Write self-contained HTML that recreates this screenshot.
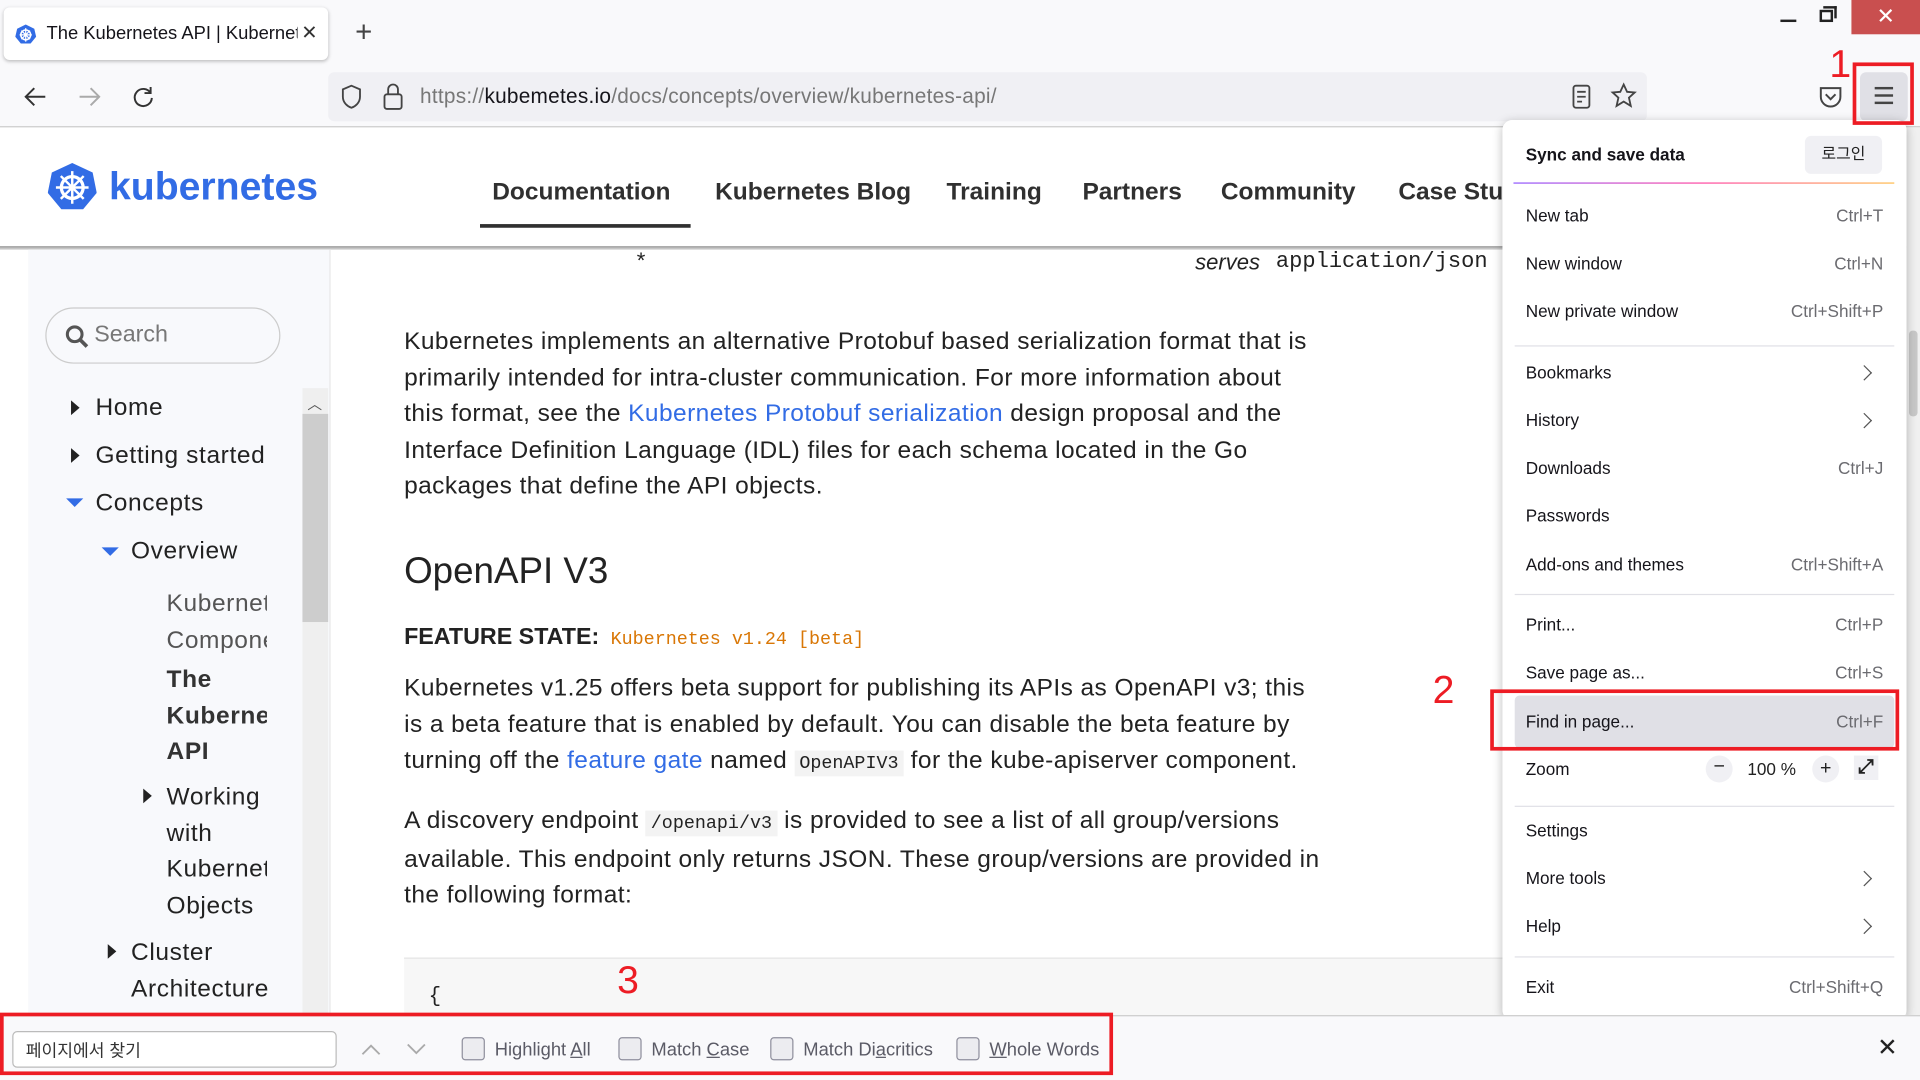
<!DOCTYPE html>
<html><head><meta charset="utf-8">
<style>
*{box-sizing:border-box;margin:0;padding:0}
html,body{width:1920px;height:1080px;overflow:hidden;background:#fff}
#s{position:absolute;left:0;top:0;width:1568px;height:882px;transform:scale(1.22449);transform-origin:0 0;font-family:"Liberation Sans","Noto Sans CJK KR",sans-serif;color:#222}
.a{position:absolute}
.mi{position:absolute;left:1246px;font-size:14px;color:#15141a}
.sc{position:absolute;right:30px;font-size:14px;color:#6b6b70}
.hr{position:absolute;left:1237px;width:310px;height:1px;background:#e0e0e6}
.ch{position:absolute;left:1521px;width:9px;height:9px;border-right:1.5px solid #555;border-top:1.5px solid #555;transform:rotate(45deg)}
.p{position:absolute;left:330px;font-size:20px;line-height:29.5px;color:#222;width:748px;letter-spacing:.35px}
.lk{color:#326ce5}
code{font-family:"Liberation Mono",monospace;font-size:15px;background:#f3f3f3;padding:2px 4px;letter-spacing:0}
.nav{position:absolute;top:146px;font-size:20px;font-weight:bold;color:#303030}
.sb{position:absolute;font-size:20px;color:#222;letter-spacing:.5px}
.tri{position:absolute;width:0;height:0;border-top:6px solid transparent;border-bottom:6px solid transparent;border-left:7px solid #222}
.trd{position:absolute;width:0;height:0;border-left:7px solid transparent;border-right:7px solid transparent;border-top:7px solid #326ce5}
.cb{position:absolute;top:847px;width:19px;height:19px;border:1px solid #8f8f9d;border-radius:3px;background:#ececf0}
.fl{position:absolute;top:849px;font-size:15px;color:#5b5b66}
.red{position:absolute;border:3px solid #ed1c24}
.rn{position:absolute;color:#ed1c24;font-size:32px;font-family:"Liberation Sans",sans-serif}
</style></head><body><div id="s">
<div class="a" style="left:0;top:0;width:1568px;height:104px;background:#f9f9fb"></div>
<div class="a" style="left:3px;top:6px;width:265px;height:43px;background:#fff;border-radius:5px;box-shadow:0 1px 3px rgba(0,0,0,.25)"></div>
<svg class="a" style="left:12px;top:19px" width="18" height="18" viewBox="0 0 18 18"><polygon points="9,1 16,4.5 17.5,11 13,16.5 5,16.5 0.5,11 2,4.5" fill="#326ce5"/><circle cx="9" cy="9.5" r="4" fill="none" stroke="#fff" stroke-width="1.3"/><path d="M9 4v11M4 9.5h10M5.5 6l7 7M12.5 6l-7 7" stroke="#fff" stroke-width="1"/></svg>
<div class="a" style="left:38px;top:19px;font-size:15px;color:#15141a;white-space:nowrap;width:205px;overflow:hidden">The Kubernetes API | Kubernet</div>
<div class="a" style="left:246px;top:17px;font-size:16px;color:#333">✕</div>
<div class="a" style="left:290px;top:13px;font-size:24px;color:#444;font-weight:300">+</div>
<div class="a" style="left:1454px;top:16px;width:13px;height:2px;background:#222"></div>
<div class="a" style="left:1486px;top:8px;width:11px;height:10px;border:2px solid #222"></div>
<div class="a" style="left:1489px;top:5px;width:11px;height:10px;border-top:2px solid #222;border-right:2px solid #222"></div>
<div class="a" style="left:1512px;top:0;width:56px;height:28px;background:#c94f4f;color:#fff;font-size:18px;text-align:center;line-height:26px">✕</div>
<svg class="a" style="left:18px;top:68px" width="22" height="22"><path d="M19 11H3M10 4l-7 7 7 7" fill="none" stroke="#333" stroke-width="1.6"/></svg>
<svg class="a" style="left:62px;top:68px" width="22" height="22"><path d="M3 11h16M12 4l7 7-7 7" fill="none" stroke="#aaa" stroke-width="1.6"/></svg>
<svg class="a" style="left:106px;top:68px" width="22" height="22"><path d="M17 8A7 7 0 1 0 18 12M17 3v5h-5" fill="none" stroke="#333" stroke-width="1.6"/></svg>
<div class="a" style="left:268px;top:59px;width:1077px;height:40px;background:#f0f0f4;border-radius:5px"></div>
<svg class="a" style="left:277px;top:68px" width="20" height="22"><path d="M10 2L3 5v6c0 5 4 8 7 9 3-1 7-4 7-9V5z" fill="none" stroke="#444" stroke-width="1.5"/></svg>
<svg class="a" style="left:312px;top:67px" width="18" height="24"><rect x="2" y="10" width="14" height="12" rx="2" fill="none" stroke="#444" stroke-width="1.5"/><path d="M5 10V6a4 4 0 0 1 8 0v4" fill="none" stroke="#444" stroke-width="1.5"/></svg>
<div class="a" style="left:343px;top:69px;font-size:17px;color:#777;letter-spacing:.2px">https://<span style="color:#15141a">kubemetes.io</span>/docs/concepts/overview/kubernetes-api/</div>
<svg class="a" style="left:1282px;top:68px" width="20" height="22"><rect x="3" y="2" width="13" height="18" rx="2" fill="none" stroke="#444" stroke-width="1.5"/><path d="M6 7h7M6 11h7M6 15h4" stroke="#444" stroke-width="1.5"/></svg>
<svg class="a" style="left:1315px;top:67px" width="22" height="22"><polygon points="11,2 13.8,8 20,8.5 15.3,12.8 16.8,19.5 11,16 5.2,19.5 6.7,12.8 2,8.5 8.2,8" fill="none" stroke="#444" stroke-width="1.5"/></svg>
<svg class="a" style="left:1484px;top:68px" width="22" height="22"><path d="M3 4h16v7a8 8 0 0 1-16 0z" fill="none" stroke="#444" stroke-width="1.6"/><path d="M7 9l4 4 4-4" fill="none" stroke="#444" stroke-width="1.6"/></svg>
<div class="a" style="left:1519px;top:59px;width:39px;height:40px;background:#e0e0e6;border-radius:5px"></div>
<div class="a" style="left:1531px;top:71px;width:15px;height:2px;background:#444;box-shadow:0 6px 0 #444,0 12px 0 #444"></div>
<div class="a" style="left:0;top:103px;width:1568px;height:1px;background:#ccc"></div>
<svg class="a" style="left:39px;top:132px" width="40" height="40" viewBox="0 0 18 18"><polygon points="9,0.5 16.5,4 18,11.5 13,17.5 5,17.5 0,11.5 1.5,4" fill="#326ce5"/><circle cx="9" cy="9.5" r="4" fill="none" stroke="#fff" stroke-width="1.2"/><path d="M9 3.5v12M3 9.5h12M4.8 5.3l8.4 8.4M13.2 5.3l-8.4 8.4" stroke="#fff" stroke-width=".9"/></svg>
<div class="a" style="left:89px;top:134px;font-size:32px;font-weight:bold;color:#326ce5">kubernetes</div>
<div class="nav" style="left:402px">Documentation</div>
<div class="a" style="left:392px;top:183px;width:172px;height:3px;background:#303030"></div>
<div class="nav" style="left:584px">Kubernetes Blog</div>
<div class="nav" style="left:773px">Training</div>
<div class="nav" style="left:884px">Partners</div>
<div class="nav" style="left:997px">Community</div>
<div class="nav" style="left:1142px">Case Stu</div>
<div class="a" style="left:0;top:201px;width:1568px;height:3px;background:linear-gradient(#999,#ddd)"></div>
<div class="a" style="left:23px;top:204px;width:247px;height:626px;background:#f8f9fc;border-right:1px solid #e8e8e8"></div>
<div class="a" style="left:37px;top:251px;width:192px;height:46px;border:1px solid #ccc;border-radius:23px;background:#f8f9fc"></div>
<svg class="a" style="left:52px;top:264px" width="22" height="22"><circle cx="9" cy="9" r="6" fill="none" stroke="#555" stroke-width="2.5"/><path d="M13 13l6 6" stroke="#555" stroke-width="3"/></svg>
<div class="a" style="left:77px;top:263px;font-size:19px;color:#777">Search</div>
<div class="a" style="left:247px;top:317px;width:21px;height:513px;background:#efefef"></div>
<div class="a" style="left:247px;top:338px;width:21px;height:170px;background:#cdcdcd"></div>
<div class="a" style="left:251px;top:321px;font-size:12px;color:#555">︿</div>
<div class="tri" style="left:58px;top:327px"></div><div class="sb" style="left:78px;top:322px">Home</div>
<div class="tri" style="left:58px;top:366px"></div><div class="sb" style="left:78px;top:361px">Getting started</div>
<div class="trd" style="left:54px;top:407px"></div><div class="sb" style="left:78px;top:400px">Concepts</div>
<div class="trd" style="left:83px;top:447px"></div><div class="sb" style="left:107px;top:439px">Overview</div>
<div class="sb" style="left:136px;top:478px;color:#555;width:82px;overflow:hidden;white-space:nowrap;line-height:30px;font-weight:300">Kubernet<br>Compone</div>
<div class="sb" style="left:136px;top:541px;font-weight:bold;color:#333;width:82px;overflow:hidden;white-space:nowrap;line-height:29.5px">The<br>Kuberne<br>API</div>
<div class="tri" style="left:117px;top:644px"></div>
<div class="sb" style="left:136px;top:637px;width:82px;overflow:hidden;white-space:nowrap;line-height:29.5px">Working<br>with<br>Kubernet<br>Objects</div>
<div class="tri" style="left:88px;top:771px"></div>
<div class="sb" style="left:107px;top:764px;line-height:29.5px">Cluster<br>Architecture</div>
<div class="a" style="left:520px;top:203px;font-size:18px">*</div>
<div class="a" style="left:976px;top:204px;font-size:18px;font-style:italic">serves</div>
<div class="a" style="left:1042px;top:204px;font-size:18px;font-family:'Liberation Mono',monospace">application/json</div>
<div class="p" style="top:265px">Kubernetes implements an alternative Protobuf based serialization format that is primarily intended for intra-cluster communication. For more information about this format, see the <span class="lk">Kubernetes Protobuf serialization</span> design proposal and the Interface Definition Language (IDL) files for each schema located in the Go packages that define the API objects.</div>
<div class="a" style="left:330px;top:450px;font-size:30px;color:#222">OpenAPI V3</div>
<div class="a" style="left:330px;top:510px;font-size:19px;font-weight:bold">FEATURE STATE: <code style="background:none;color:#d97706;font-weight:normal">Kubernetes v1.24 [beta]</code></div>
<div class="p" style="top:548px">Kubernetes v1.25 offers beta support for publishing its APIs as OpenAPI v3; this is a beta feature that is enabled by default. You can disable the beta feature by turning off the <span class="lk">feature gate</span> named <code>OpenAPIV3</code> for the kube-apiserver component.</div>
<div class="p" style="top:656px">A discovery endpoint <code>/openapi/v3</code> is provided to see a list of all group/versions available. This endpoint only returns JSON. These group/versions are provided in the following format:</div>
<div class="a" style="left:330px;top:782px;width:900px;height:50px;background:#f7f7f7;border-top:1px solid #e5e5e5"></div>
<div class="a" style="left:350px;top:805px;font-size:17px;font-family:'Liberation Mono',monospace">{</div>
<div class="a" style="left:1557px;top:104px;width:11px;height:725px;background:#f0f0f0"></div>
<div class="a" style="left:1559px;top:270px;width:7px;height:70px;background:#c8c8c8;border-radius:3px"></div>
<div class="a" style="left:1227px;top:98px;width:330px;height:735px;background:#fff;border-radius:8px;box-shadow:0 2px 8px rgba(0,0,0,.25)"></div>
<div class="mi" style="top:118px;font-weight:bold">Sync and save data</div>
<div class="a" style="left:1474px;top:111px;width:63px;height:31px;background:#f0f0f4;border-radius:5px;font-size:13px;text-align:center;line-height:30px">로그인</div>
<div class="a" style="left:1236px;top:149px;width:311px;height:1px;background:linear-gradient(90deg,#9059ff,#ff4aa2,#ffbd4f)"></div>
<div class="mi" style="top:168px">New tab</div><div class="sc" style="top:168px">Ctrl+T</div>
<div class="mi" style="top:207px">New window</div><div class="sc" style="top:207px">Ctrl+N</div>
<div class="mi" style="top:246px">New private window</div><div class="sc" style="top:246px">Ctrl+Shift+P</div>
<div class="hr" style="top:282px"></div>
<div class="mi" style="top:296px">Bookmarks</div><div class="ch" style="top:300px;left:1518px"></div>
<div class="mi" style="top:335px">History</div><div class="ch" style="top:339px;left:1518px"></div>
<div class="mi" style="top:374px">Downloads</div><div class="sc" style="top:374px">Ctrl+J</div>
<div class="mi" style="top:413px">Passwords</div>
<div class="mi" style="top:453px">Add-ons and themes</div><div class="sc" style="top:453px">Ctrl+Shift+A</div>
<div class="hr" style="top:485px"></div>
<div class="mi" style="top:502px">Print...</div><div class="sc" style="top:502px">Ctrl+P</div>
<div class="mi" style="top:541px">Save page as...</div><div class="sc" style="top:541px">Ctrl+S</div>
<div class="a" style="left:1237px;top:568px;width:310px;height:43px;background:#e0e0e6;border-radius:4px"></div>
<div class="mi" style="top:581px">Find in page...</div><div class="sc" style="top:581px">Ctrl+F</div>
<div class="mi" style="top:620px">Zoom</div>
<div class="a" style="left:1393px;top:617px;width:22px;height:22px;border-radius:11px;background:#f0f0f4;text-align:center;font-size:16px;line-height:20px">−</div>
<div class="a" style="left:1427px;top:620px;font-size:14px">100 %</div>
<div class="a" style="left:1480px;top:617px;width:22px;height:22px;border-radius:11px;background:#f0f0f4;text-align:center;font-size:16px;line-height:21px">+</div>
<div class="a" style="left:1514px;top:617px;width:20px;height:20px;background:#f0f0f4;font-size:16px;text-align:center;line-height:20px;font-weight:bold">⤢</div>
<div class="hr" style="top:658px"></div>
<div class="mi" style="top:670px">Settings</div>
<div class="mi" style="top:709px">More tools</div><div class="ch" style="top:713px;left:1518px"></div>
<div class="mi" style="top:748px">Help</div><div class="ch" style="top:752px;left:1518px"></div>
<div class="hr" style="top:781px"></div>
<div class="mi" style="top:798px">Exit</div><div class="sc" style="top:798px">Ctrl+Shift+Q</div>
<div class="a" style="left:0;top:829px;width:1568px;height:53px;background:#f9f9fb;border-top:1px solid #ccc"></div>
<div class="a" style="left:10px;top:842px;width:265px;height:30px;background:#fff;border:1px solid #bbb;border-radius:4px;font-size:14px;padding:5px 10px;color:#333">페이지에서 찾기</div>
<svg class="a" style="left:294px;top:850px" width="18" height="14"><path d="M2 11l7-7 7 7" fill="none" stroke="#aaa" stroke-width="1.5"/></svg>
<svg class="a" style="left:331px;top:850px" width="18" height="14"><path d="M2 3l7 7 7-7" fill="none" stroke="#aaa" stroke-width="1.5"/></svg>
<div class="cb" style="left:377px"></div><div class="fl" style="left:404px">Highlight <u>A</u>ll</div>
<div class="cb" style="left:505px"></div><div class="fl" style="left:532px">Match <u>C</u>ase</div>
<div class="cb" style="left:629px"></div><div class="fl" style="left:656px">Match Di<u>a</u>critics</div>
<div class="cb" style="left:781px"></div><div class="fl" style="left:808px"><u>W</u>hole Words</div>
<div class="a" style="left:1533px;top:843px;font-size:20px;color:#222">✕</div>
<div class="red" style="left:1513px;top:51px;width:50px;height:51px"></div>
<div class="rn" style="left:1494px;top:34px">1</div>
<div class="red" style="left:1217px;top:563px;width:334px;height:50px"></div>
<div class="rn" style="left:1170px;top:545px">2</div>
<div class="red" style="left:0;top:827px;width:909px;height:51px"></div>
<div class="rn" style="left:504px;top:782px">3</div>
</div></body></html>
